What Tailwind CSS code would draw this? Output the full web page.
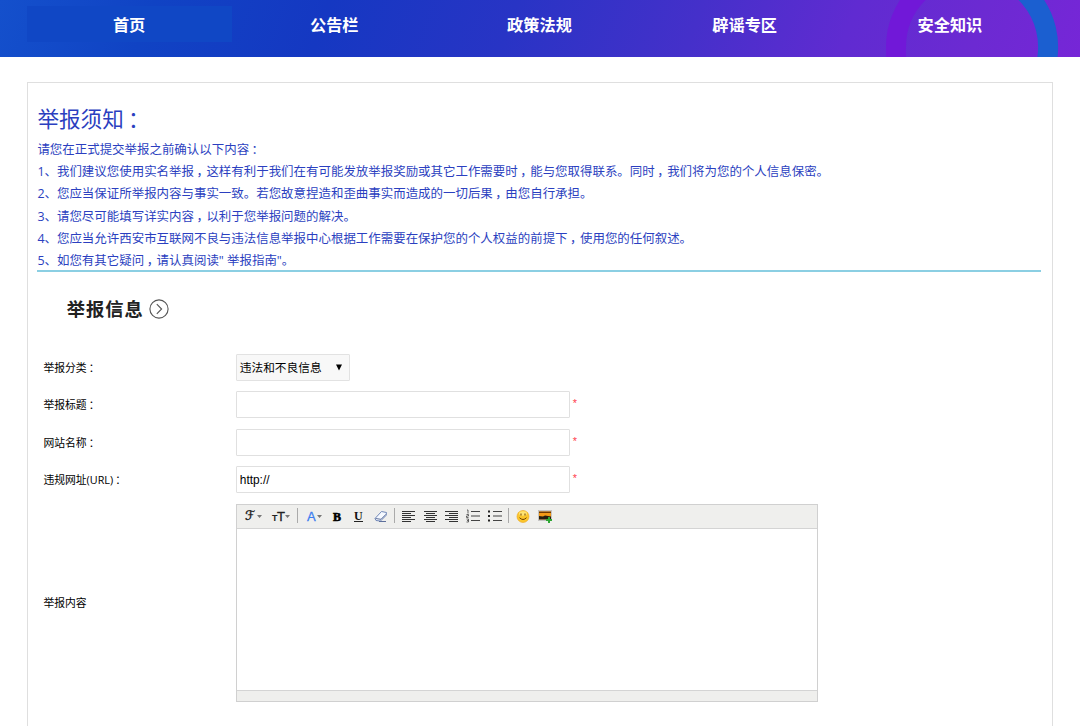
<!DOCTYPE html>
<html lang="zh-CN">
<head>
    <meta charset="UTF-8">
    <meta name="viewport" content="width=device-width, initial-scale=1.0">
    <title>举报须知</title>
    <script src="https://cdn.jsdelivr.net/npm/@tailwindcss/browser@4"></script>
</head>
<body class="bg-white h-[726px] overflow-hidden font-['Open_Sans','Noto_Sans_CJK_SC',sans-serif] text-black">

    <!-- Navigation -->
    <header class="relative h-[57px] overflow-hidden bg-[linear-gradient(110deg,#1450cc_0%,#1043c4_14%,#1538c2_30%,#2834c5_47%,#4530ca_64%,#602bd1_78%,#6c2ad2_90%,#7626d7_100%)]">
        <svg class="absolute left-0 top-0" width="1080" height="57" viewBox="0 0 1080 57" fill="none">
            <path d="M896 47a76 76 0 0 1 76-76" stroke="#7118d8" stroke-width="20"/>
            <path d="M896 46v12" stroke="#7118d8" stroke-width="20"/>
            <path d="M972-29a76 76 0 0 1 75 89" stroke="#1b5fd0" stroke-width="20"/>
        </svg>
        <nav class="relative mx-auto mt-1.5 grid w-[1026px] grid-cols-5 text-center text-[16.2px] leading-[38px] font-bold text-white">
            <a class="h-9 bg-[#1047c5] pr-px">首页</a>
            <a class="pr-px">公告栏</a>
            <a class="pr-px">政策法规</a>
            <a class="pr-px">辟谣专区</a>
            <a class="pr-px">安全知识</a>
        </nav>
    </header>

    <main class="mx-auto mt-[25px] h-[644px] w-[1026px] border border-b-0 border-[#dfdfdf] pr-[11px] pl-[9.4px] pt-[19px]">

        <!-- Notice -->
        <section class="h-[170px] border-b-2 border-[#8bcfe3] text-[12.46px] leading-[22.3px] text-[#2b3fc0]">
            <h1 class="h-[36.7px] text-[21.6px] leading-[34px]">举报须知<span class="pl-[.2em] tracking-[-.2em]">：</span></h1>
            <p class="h-[22.35px]">请您在正式提交举报之前确认以下内容<span class="pl-[.2em] tracking-[-.2em]">：</span></p>
            <p class="h-[22.35px]">1、我们建议您使用实名举报<span class="pl-[.2em] tracking-[-.2em]">，</span>这样有利于我们在有可能发放举报奖励或其它工作需要时<span class="pl-[.2em] tracking-[-.2em]">，</span>能与您取得联系。同时<span class="pl-[.2em] tracking-[-.2em]">，</span>我们将为您的个人信息保密。</p>
            <p class="h-[22.35px]">2、您应当保证所举报内容与事实一致。若您故意捏造和歪曲事实而造成的一切后果<span class="pl-[.2em] tracking-[-.2em]">，</span>由您自行承担。</p>
            <p class="h-[22.35px]">3、请您尽可能填写详实内容<span class="pl-[.2em] tracking-[-.2em]">，</span>以利于您举报问题的解决。</p>
            <p class="h-[22.35px]">4、您应当允许西安市互联网不良与违法信息举报中心根据工作需要在保护您的个人权益的前提下<span class="pl-[.2em] tracking-[-.2em]">，</span>使用您的任何叙述。</p>
            <p class="h-[22.35px]">5、如您有其它疑问<span class="pl-[.2em] tracking-[-.2em]">，</span>请认真阅读" 举报指南"。</p>
        </section>

        <!-- Section title -->
        <div class="mt-[22px] ml-[29.4px] flex h-[30px] items-center gap-[5px]">
            <h2 class="text-[18.3px] leading-[30px] font-bold tracking-[1px] text-[#222]">举报信息</h2>
            <svg width="20" height="20" viewBox="0 0 20 20" fill="none" stroke="#555" stroke-width="1.1">
                <circle cx="10" cy="10" r="9.1"/>
                <path d="M7.8 5.2l4.8 4.8-4.8 4.8"/>
            </svg>
        </div>

        <!-- Form -->
        <form class="mt-[29.7px] ml-[6px] grid grid-cols-[192.4px_1fr] grid-rows-[27px_27px_27px_27px_198px] gap-y-[10.5px] text-[10.8px]">
            <label class="leading-[27px]">举报分类<span class="pl-[.2em] tracking-[-.2em]">：</span></label>
            <div class="flex h-[27px] w-[114px] items-center justify-between rounded-[1px] border border-[#e2e2e2] bg-[#f8f8f8] pr-[7px] pl-[3px] text-[11.7px]">
                <span class="pt-0.5">违法和不良信息</span>
                <svg width="6" height="7" viewBox="0 0 6 7"><path d="M0 .5h6L3 6.5z"/></svg>
            </div>

            <label class="leading-[27px]">举报标题<span class="pl-[.2em] tracking-[-.2em]">：</span></label>
            <div class="flex gap-[3px]">
                <input type="text" class="h-[27px] w-[334px] rounded-[1px] border border-[#e0e0e0] px-1">
                <span class="pt-1 font-['Liberation_Sans'] text-[#ff3b4b]">*</span>
            </div>

            <label class="leading-[27px]">网站名称<span class="pl-[.2em] tracking-[-.2em]">：</span></label>
            <div class="flex gap-[3px]">
                <input type="text" class="h-[27px] w-[334px] rounded-[1px] border border-[#e0e0e0] px-1">
                <span class="pt-1 font-['Liberation_Sans'] text-[#ff3b4b]">*</span>
            </div>

            <label class="leading-[27px]">违规网址(URL)<span class="pl-[.2em] tracking-[-.2em]">：</span></label>
            <div class="flex gap-[3px]">
                <input type="text" value="http://" class="h-[27px] w-[334px] rounded-[1px] border border-[#e0e0e0] px-[3px] font-['Liberation_Sans'] text-[11.9px]">
                <span class="pt-1 font-['Liberation_Sans'] text-[#ff3b4b]">*</span>
            </div>

            <label class="self-center pt-px leading-[20px]">举报内容</label>
            <div class="h-[198px] w-[582px] border border-[#d0d0d0]">
                <!-- Editor toolbar -->
                <div class="h-6 border-b border-[#d4d4d4] bg-[#efefed]">
                    <svg class="-ml-px" width="330" height="23" viewBox="0 1 330 23" fill="none">
                        <text x="9" y="16" font-family="DejaVu Serif, DejaVu Sans" font-size="13" fill="#222" stroke="#222" stroke-width=".4">ℱ</text>
                        <path d="M21 11h5l-2.500 3zM49 11h5l-2.500 3zM81 11h5l-2.500 3z" fill="#777"/>
                        <text x="36" y="16.500" font-family="Liberation Sans" font-size="9" font-weight="bold" fill="#222">T</text>
                        <text x="41" y="16.500" font-family="Liberation Sans" font-size="13" fill="#222" stroke="#222" stroke-width=".3">T</text>
                        <text x="71" y="17" font-family="Liberation Sans" font-size="13" fill="#3c7df0" stroke="#3c7df0" stroke-width=".3">A</text>
                        <text x="97" y="16.500" font-family="Liberation Serif" font-size="12" font-weight="bold" fill="#000" stroke="#000" stroke-width=".6">B</text>
                        <text x="118" y="16" font-family="Liberation Serif" font-size="12" font-weight="bold" fill="#111">U</text>
                        <path d="M118 17.500h9" stroke="#222"/>
                        <path d="M61.500 4v15M158.500 4v15M272.500 4v15" stroke="#aaa"/>
                        <path d="M139 14.500l6.500-7 5 1-.5 3-5.500 5.500-4.500-.5z" fill="#f5f9ff" stroke="#7188b8"/>
                        <path d="M139.500 14.500l5.500.8 5-5M143 17.500h7" stroke="#5e709c"/>
                        <path d="M166 7.500h13M166 9.500h9M166 11.500h13M166 13.500h9M166 15.500h13M166 17.500h9" stroke="#333"/>
                        <path d="M188 7.500h13M190 9.500h9M188 11.500h13M190 13.500h9M188 15.500h13M190 17.500h9" stroke="#333"/>
                        <path d="M209 7.500h13M213 9.500h9M209 11.500h13M213 13.500h9M209 15.500h13M213 17.500h9" stroke="#333"/>
                        <path d="M235 7.500h9M235 12h9M235 16.500h9M257 7.500h9M257 12h9M257 16.500h9" stroke="#444" stroke-width="1.200"/>
                        <path d="M231 6h1v3.500M230.500 10.500h2v1.500h-2v1.500h2M230.500 15h2v3h-2M231 16.500h1.500" stroke="#444" stroke-width=".8"/>
                        <path d="M252 6.500h2v2h-2zM252 11h2v2h-2zM252 15.500h2v2h-2z" fill="#222"/>
                        <circle cx="287" cy="12.500" r="6" fill="#fbc62c" stroke="#eba51b" stroke-width=".6"/>
                        <ellipse cx="287" cy="9.500" rx="4" ry="2.200" fill="#ffe474"/>
                        <path d="M285 9.500v2M289 9.500v2M283.500 13.700q3.500 3.600 7 0" stroke="#704000"/>
                        <rect x="302.500" y="6.500" width="13" height="10" fill="#f4f4f4" stroke="#bbb" stroke-width=".8"/>
                        <path d="M303 7.500h12v8h-12z" fill="#f39a16"/>
                        <path d="M303 7.500h12v1.500h-12z" fill="#713900"/>
                        <path d="M303 12l4 .5 2-1 6 1v3h-12z" fill="#261e10"/>
                        <path d="M313 13v6M310 16h6" stroke="#2fa735" stroke-width="2"/>
                    </svg>
                </div>
                <div class="h-[161px]"></div>
                <div class="h-[11px] border-t border-[#d4d4d4] bg-[#efefed]"></div>
            </div>
        </form>
    </main>

</body>
</html>
